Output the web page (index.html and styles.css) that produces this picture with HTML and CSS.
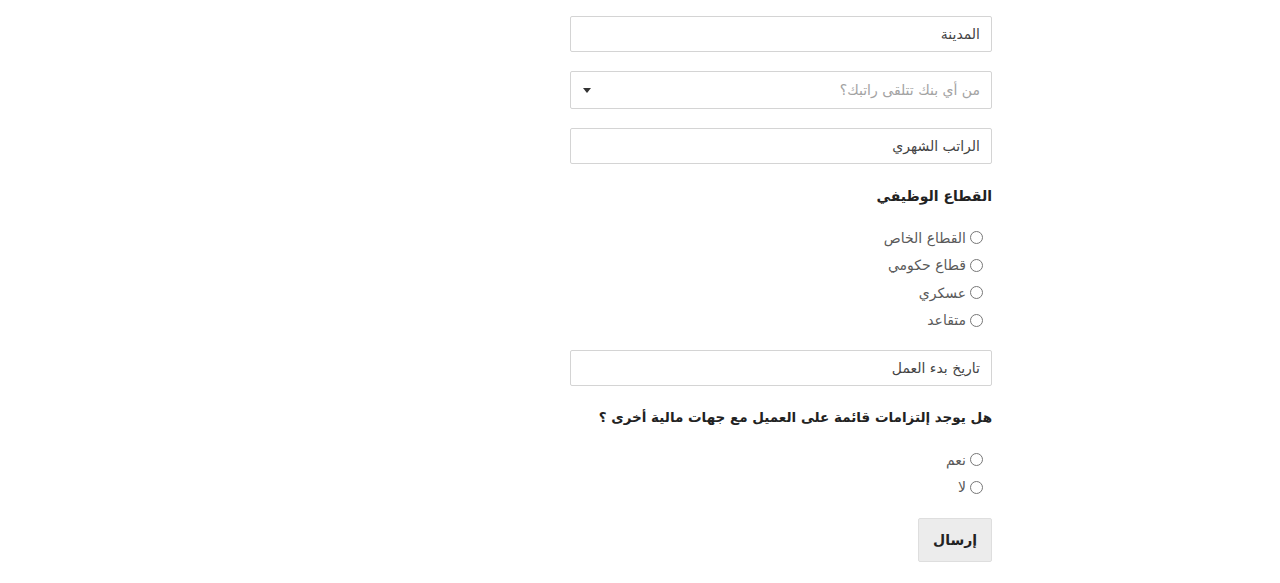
FILE: index.html
```html
<!DOCTYPE html>
<html lang="ar" dir="rtl">
<head>
<meta charset="utf-8">
<link rel="stylesheet" href="styles.css">
</head>
<body>
<div class="page">
  <form class="form">
    <div class="field f1"><span class="value">المدينة</span></div>
    <div class="field select"><span class="placeholder">من أي بنك تتلقى راتبك؟</span><span class="caret"></span></div>
    <div class="field"><span class="value">الراتب الشهري</span></div>
    <h4 class="heading h1">القطاع الوظيفي</h4>
    <div class="radios r1">
      <label class="radio"><span class="circle"></span>القطاع الخاص</label>
      <label class="radio"><span class="circle"></span>قطاع حكومي</label>
      <label class="radio"><span class="circle"></span>عسكري</label>
      <label class="radio"><span class="circle"></span>متقاعد</label>
    </div>
    <div class="field f4"><span class="value">تاريخ بدء العمل</span></div>
    <h4 class="heading h2">هل يوجد إلتزامات قائمة على العميل مع جهات مالية أخرى ؟</h4>
    <div class="radios r2">
      <label class="radio"><span class="circle"></span>نعم</label>
      <label class="radio"><span class="circle"></span>لا</label>
    </div>
    <div class="actions"><button type="button" class="btn">إرسال</button></div>
  </form>
</div>
</body>
</html>
```
FILE: styles.css
```css
html, body {
  margin: 0;
  padding: 0;
  background: #fff;
}
body {
  font-family: "DejaVu Sans", "Noto Sans", sans-serif;
  color: #333;
}
.page {
  display: flex;
  justify-content: flex-start;
  padding-right: 288px;
  padding-top: 16px;
}
.form {
  width: 422px;
  display: flex;
  flex-direction: column;
}
.field {
  box-sizing: border-box;
  height: 36px;
  border: 1px solid #d4d4d4;
  border-radius: 2px;
  display: flex;
  align-items: center;
  padding: 0 11px;
  margin-bottom: 20px;
  font-size: 14px;
}
.field.f1 { margin-bottom: 19px; }
.field.select {
  height: 38px;
  justify-content: space-between;
  margin-bottom: 19px;
}
.value {
  color: #444;
}
.placeholder {
  color: #a3a3a3;
}
.caret {
  width: 0;
  height: 0;
  border-left: 4px solid transparent;
  border-right: 4px solid transparent;
  border-top: 5px solid #333;
  margin-left: 1px;
}
.heading {
  margin: 0;
  font-size: 14px;
  line-height: 20px;
  font-weight: bold;
  color: #222;
}
.h1 { margin-top: 2px; }
.h2 { font-size: 13.5px; }
.radios {
  display: flex;
  flex-direction: column;
  align-items: flex-start;
}
.r1 { margin-top: 18px; margin-bottom: 16px; }
.r2 { margin-top: 19px; margin-bottom: 17px; }
.radio {
  display: flex;
  align-items: center;
  height: 27.5px;
  font-size: 14px;
  color: #5a5a5a;
  padding-right: 9px;
}
.circle {
  box-sizing: border-box;
  width: 13px;
  height: 13px;
  border: 1.5px solid #777;
  border-radius: 50%;
  margin-left: 4px;
}
.f4 { margin-bottom: 21px; }
.actions {
  display: flex;
}
.btn {
  width: 74px;
  height: 44px;
  background: #ececec;
  border: 1px solid #dedede;
  border-radius: 2px;
  font-family: inherit;
  font-size: 14px;
  font-weight: bold;
  color: #222;
  padding: 0;
}
```
